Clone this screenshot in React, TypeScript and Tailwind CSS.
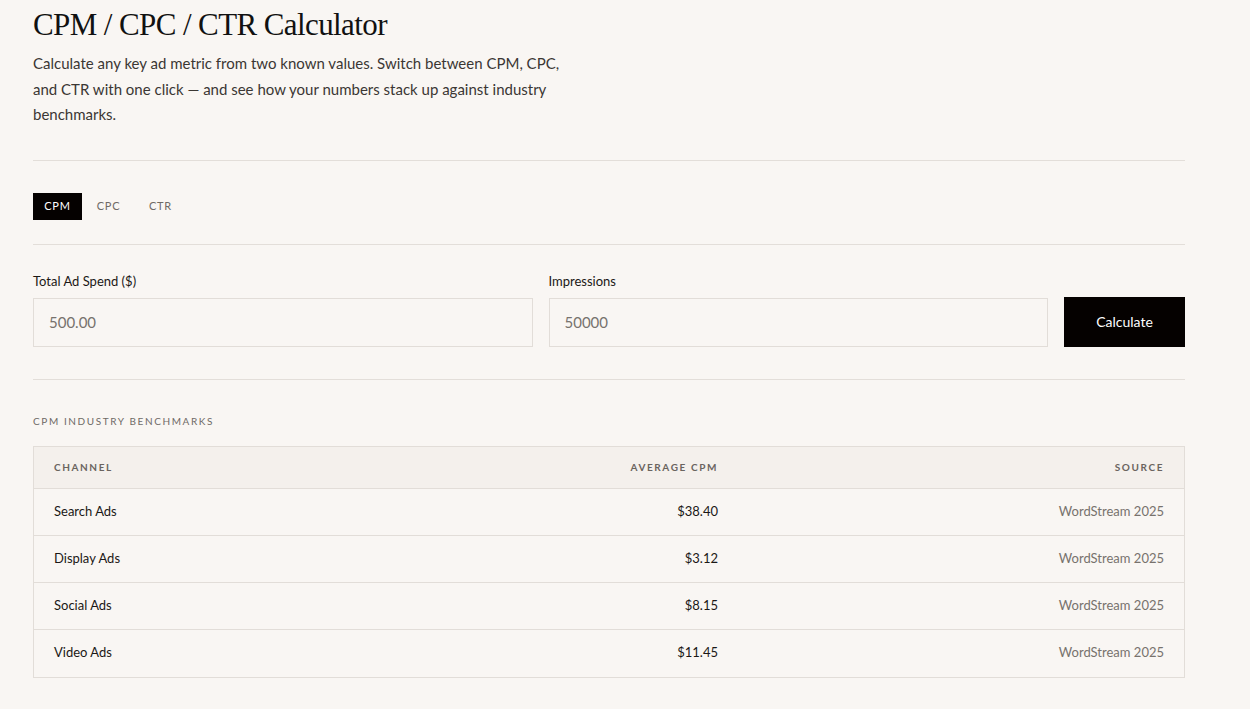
import React, { useState } from 'react';

const rows = [
  { channel: 'Search Ads', value: '$38.40', source: 'WordStream 2025' },
  { channel: 'Display Ads', value: '$3.12', source: 'WordStream 2025' },
  { channel: 'Social Ads', value: '$8.15', source: 'WordStream 2025' },
  { channel: 'Video Ads', value: '$11.45', source: 'WordStream 2025' },
];

const tabs = ['CPM', 'CPC', 'CTR'];

export default function App() {
  const [active, setActive] = useState('CPM');

  return (
    <div
      className="min-h-[709px] bg-[#f9f6f3] text-[#111] px-[33px] pt-[7px]"
      style={{ fontFamily: 'Lato, "Open Sans", sans-serif' }}
    >
      <div className="w-[1152px]">
        {/* Header */}
        <h1
          className="text-[31px] leading-[36px] text-[#111] tracking-[-0.6px]"
          style={{ fontFamily: '"Liberation Serif", serif' }}
        >
          CPM / CPC / CTR Calculator
        </h1>
        <p className="mt-[8px] w-[570px] text-[15px] leading-[25.5px] text-[#3b3733]">
          Calculate any key ad metric from two known values. Switch between CPM, CPC,
          <br />
          and CTR with one click — and see how your numbers stack up against industry benchmarks.
        </p>

        <div className="mt-[32px] border-t border-[#e3ded9]" />

        {/* Tabs */}
        <div className="flex items-center gap-[1px] pt-[32px] pb-[24px]">
          {tabs.map(t => (
            <button
              key={t}
              onClick={() => setActive(t)}
              className={`h-[27px] px-[11px] text-[11px] tracking-[0.8px] ${
                active === t ? 'bg-[#050100] text-white w-[49px]' : 'text-[#6f6a66] w-[51px]'
              }`}
            >
              {t}
            </button>
          ))}
        </div>

        <div className="border-t border-[#e3ded9]" />

        {/* Inputs */}
        <div className="flex items-end gap-[16px] pt-[27px]">
          <label className="flex-1 flex flex-col">
            <span className="text-[13px] leading-[18px] text-[#1b1816] mb-[8px]">Total Ad Spend ($)</span>
            <input
              placeholder="500.00"
              className="h-[49px] border border-[#e2ddd8] bg-[#f9f6f3] px-[15px] text-[15px] placeholder:text-[#77726d] outline-none"
            />
          </label>
          <label className="flex-1 flex flex-col">
            <span className="text-[13px] leading-[18px] text-[#1b1816] mb-[8px]">Impressions</span>
            <input
              placeholder="50000"
              className="h-[49px] border border-[#e2ddd8] bg-[#f9f6f3] px-[15px] text-[15px] placeholder:text-[#77726d] outline-none"
            />
          </label>
          <button className="w-[121px] h-[50px] bg-[#050100] text-white text-[14px]">Calculate</button>
        </div>

        <div className="mt-[32px] border-t border-[#e3ded9]" />

        {/* Benchmarks */}
        <div className="pt-[35px] text-[10px] tracking-[1.6px] text-[#6f6a66] uppercase leading-[12px]">
          CPM Industry Benchmarks
        </div>

        <div className="mt-[19px] border border-[#e2ddd8]">
          <div className="grid grid-cols-[352px_352px_1fr] h-[42px] items-center bg-[#f4f0ec] border-b border-[#e2ddd8] text-[10px] font-bold tracking-[1.6px] text-[#6a645f]">
            <div className="pl-[20px]">CHANNEL</div>
            <div className="text-right pr-[20px]">AVERAGE CPM</div>
            <div className="text-right pr-[20px]">SOURCE</div>
          </div>
          {rows.map((r, i) => (
            <div
              key={r.channel}
              className={`grid grid-cols-[352px_352px_1fr] h-[47px] items-center text-[13px] ${
                i < rows.length - 1 ? 'border-b border-[#e2ddd8]' : ''
              }`}
            >
              <div className="pl-[20px] text-[#1b1816]">{r.channel}</div>
              <div className="text-right pr-[20px] text-[#1b1816]">{r.value}</div>
              <div className="text-right pr-[20px] text-[#77726d]">{r.source}</div>
            </div>
          ))}
        </div>
      </div>
    </div>
  );
}
